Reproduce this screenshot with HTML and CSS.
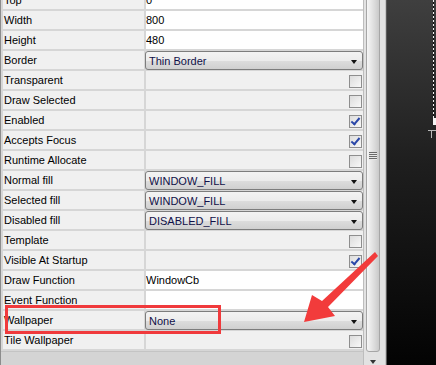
FILE: index.html
```html
<!DOCTYPE html>
<html lang="en">
<head>
    <meta charset="UTF-8">
    <title>Window Properties</title>
    <link rel="stylesheet" href="styles.css">
</head>
<body>

<div class="screen">
    <div class="props">
        <div class="grid">
            <div class="label">Top</div><div class="value text">0</div>
            <div class="label">Width</div><div class="value text">800</div>
            <div class="label">Height</div><div class="value text">480</div>
            <div class="label">Border</div><div class="value"><div class="combo">Thin Border<span class="caret"></span></div></div>
            <div class="label">Transparent</div><div class="value check"><span class="box"></span></div>
            <div class="label">Draw Selected</div><div class="value check"><span class="box"></span></div>
            <div class="label">Enabled</div><div class="value check"><span class="box checked"></span></div>
            <div class="label">Accepts Focus</div><div class="value check"><span class="box checked"></span></div>
            <div class="label">Runtime Allocate</div><div class="value check"><span class="box"></span></div>
            <div class="label">Normal fill</div><div class="value"><div class="combo">WINDOW_FILL<span class="caret"></span></div></div>
            <div class="label">Selected fill</div><div class="value"><div class="combo">WINDOW_FILL<span class="caret"></span></div></div>
            <div class="label">Disabled fill</div><div class="value"><div class="combo">DISABLED_FILL<span class="caret"></span></div></div>
            <div class="label">Template</div><div class="value check"><span class="box"></span></div>
            <div class="label">Visible At Startup</div><div class="value check"><span class="box checked"></span></div>
            <div class="label">Draw Function</div><div class="value text">WindowCb</div>
            <div class="label">Event Function</div><div class="value text"></div>
            <div class="label">Wallpaper</div><div class="value"><div class="combo">None<span class="caret"></span></div></div>
            <div class="label">Tile Wallpaper</div><div class="value check"><span class="box"></span></div>
        </div>
        <div class="footer"></div>
    </div>

    <div class="scrollbar">
        <div class="thumb"><span class="grip"></span></div>
        <div class="arrow-btn"><span class="down"></span></div>
    </div>

    <div class="canvas">
        <div class="dash"></div>
        <div class="mark-top"></div>
        <div class="mark-h"></div>
        <div class="mark-v"></div>
    </div>

    <!-- annotation -->
    <div class="highlight"></div>
    <svg class="pointer" width="436" height="365" viewBox="0 0 436 365">
        <polygon points="304,322 312,295 322,301 375,252 378,256 328,307 335,316" fill="#f23b3b"/>
    </svg>
</div>

</body>
</html>
```

FILE: styles.css
```css
body {
    margin: 0;
    padding: 0;
    font-family: "Liberation Sans", Arial, sans-serif;
    font-size: 11px;
    background-color: #f0f0f0;
}
.screen {
    position: relative;
    display: flex;
    width: 436px;
    height: 365px;
    overflow: hidden;
}
.props {
    width: 363px;
    display: flex;
    flex-direction: column;
    border-left: 1px solid #8c8c8c;
    box-sizing: border-box;
    background-color: #d6d6d6;
}
.grid {
    display: grid;
    grid-template-columns: 141px 217px;
    grid-auto-rows: 18px;
    gap: 2px;
    padding-left: 2px;
    margin-top: -9px;
    padding-bottom: 2px;
    background-color: #d6d6d6;
}
.label {
    background-color: #f0f0f0;
    color: #000;
    line-height: 19px;
    padding-left: 1px;
    white-space: nowrap;
    overflow: hidden;
}
.value {
    background-color: #f0f0f0;
    position: relative;
}
.value.text {
    background-color: #fff;
    line-height: 19px;
    padding-left: 0;
    color: #000;
    overflow: hidden;
}
.value.check {
    display: flex;
    justify-content: flex-end;
    align-items: center;
    padding-top: 2px;
    padding-right: 1px;
    box-sizing: border-box;
}
.box {
    width: 11px;
    height: 11px;
    border: 1px solid #8e8e8e;
    background: linear-gradient(135deg, #dcdcdc, #f8f8f8);
    position: relative;
}
.box.checked::after {
    content: "";
    position: absolute;
    left: 3px;
    top: 0px;
    width: 3px;
    height: 7px;
    border-right: 2px solid #2a47a8;
    border-bottom: 2px solid #2a47a8;
    transform: rotate(40deg);
}
.combo {
    margin-left: -1px;
    height: 19px;
    box-sizing: border-box;
    border: 1px solid #7d7d7d;
    border-radius: 3px;
    background: linear-gradient(#f3f3f3 0, #ececec 50%, #dedede 50%, #d0d0d0 100%);
    color: #101048;
    line-height: 18px;
    padding-left: 3px;
    position: relative;
}
.caret {
    position: absolute;
    right: 5px;
    top: 8px;
    border-left: 3.5px solid transparent;
    border-right: 3.5px solid transparent;
    border-top: 4px solid #111;
}
.footer {
    flex: 1;
    background-color: #d4d4d4;
    border-top: 1px solid #c4c4c4;
}
.scrollbar {
    width: 23px;
    display: flex;
    flex-direction: column;
    background: linear-gradient(to right, #bdbdbd 0, #bdbdbd 1px, #e2e2e2 1px, #e2e2e2 22px, #c6c6c6 22px);
}
.thumb {
    flex: 1;
    margin: -40px 6px 0 3px;
    border: 1px solid #a6a6a6;
    border-radius: 3px;
    background: linear-gradient(to right, #f6f6f6, #dcdcdc 60%, #c9c9c9);
    display: flex;
    align-items: center;
    justify-content: center;
}
.grip {
    width: 8px;
    height: 8px;
    background: repeating-linear-gradient(#6a6a6a 0, #6a6a6a 1px, #e8e8e8 1px, #e8e8e8 2px);
}
.arrow-btn {
    height: 13px;
    display: flex;
    justify-content: center;
    align-items: flex-end;
    padding-right: 3px;
}
.down {
    margin-bottom: 1px;
    border-left: 3.5px solid transparent;
    border-right: 3.5px solid transparent;
    border-top: 4px solid #333;
}
.canvas {
    flex: 1;
    position: relative;
    background: linear-gradient(#3f3f3f, #1e1e1e 45%, #030303);
    border-left: 1px solid #5a5a5a;
}
.dash {
    position: absolute;
    left: 46px;
    top: 0;
    width: 1px;
    height: 118px;
    background: repeating-linear-gradient(#f0f0f0 0, #f0f0f0 2px, #111 2px, #111 4px);
}
.mark-top {
    position: absolute;
    left: 46px;
    top: 118px;
    width: 4px;
    height: 7px;
    background-color: #f4f4f4;
}
.mark-h {
    position: absolute;
    left: 41px;
    top: 130px;
    width: 9px;
    height: 1px;
    background-color: #b8b8b8;
}
.mark-v {
    position: absolute;
    left: 44px;
    top: 130px;
    width: 1px;
    height: 8px;
    background-color: #b8b8b8;
}
.highlight {
    position: absolute;
    left: 5px;
    top: 305px;
    width: 216px;
    height: 29px;
    box-sizing: border-box;
    border: 3px solid #f03a3c;
}
.pointer {
    position: absolute;
    left: 0;
    top: 0;
}
```
